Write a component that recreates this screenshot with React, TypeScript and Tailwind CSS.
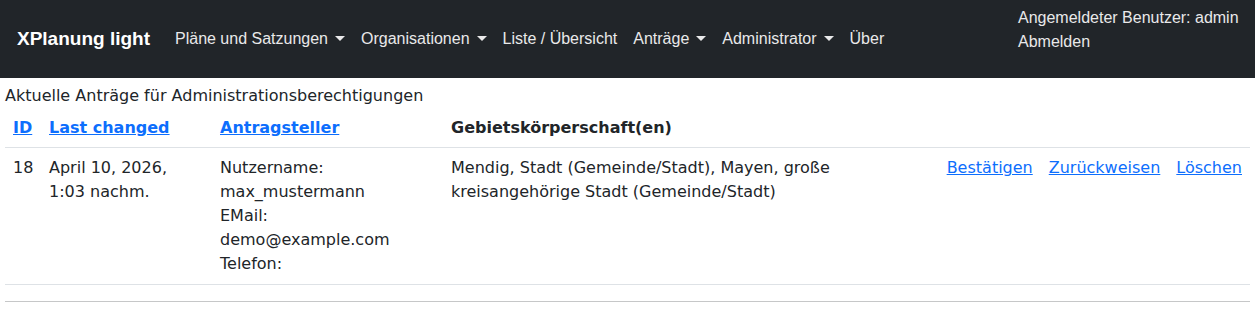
import React from 'react';

const navItems = [
  { label: 'Pläne und Satzungen', dropdown: true },
  { label: 'Organisationen', dropdown: true },
  { label: 'Liste / Übersicht', dropdown: false },
  { label: 'Anträge', dropdown: true },
  { label: 'Administrator', dropdown: true },
  { label: 'Über', dropdown: false },
];

const Caret = () => (
  <span className="ml-[7px] inline-block align-[3px] border-t-[5px] border-x-[5px] border-x-transparent border-t-[#e9e9ea]" />
);

export default function App() {
  return (
    <div className="min-h-[310px] bg-white text-[#212529] font-['DejaVu_Sans',sans-serif]">
      {/* Navbar */}
      <nav className="h-[78px] bg-[#212529] flex items-center pl-[17px] pr-4 font-['Liberation_Sans',Arial,sans-serif]">
        <span className="text-[19px] font-bold text-white mr-[17px]">XPlanung light</span>
        <ul className="flex items-center">
          {navItems.map((item) => (
            <li key={item.label} className="px-2 text-[16px] text-[#e9e9ea] whitespace-nowrap">
              {item.label}
              {item.dropdown && <Caret />}
            </li>
          ))}
        </ul>
        <div className="ml-auto self-start pt-[6px] text-[16px] leading-[24px] text-[#e9e9ea] w-[221px]">
          <div>Angemeldeter Benutzer: admin</div>
          <div>Abmelden</div>
        </div>
      </nav>

      {/* Content */}
      <div className="px-[5px]">
        <div className="pt-[6px] text-[16px] leading-[24px]">
          Aktuelle Anträge für Administrationsberechtigungen
        </div>
        <table className="w-full table-fixed border-collapse text-[16px] leading-[24px]">
          <colgroup>
            <col className="w-[36px]" />
            <col className="w-[171px]" />
            <col className="w-[231px]" />
            <col className="w-[497px]" />
            <col />
          </colgroup>
          <thead>
            <tr className="border-b border-[#dee2e6]">
              <th className="px-2 pt-2 pb-[7px] text-left font-bold">
                <a className="text-[#0d6efd] underline">ID</a>
              </th>
              <th className="px-2 pt-2 pb-[7px] text-left font-bold">
                <a className="text-[#0d6efd] underline">Last changed</a>
              </th>
              <th className="px-2 pt-2 pb-[7px] text-left font-bold">
                <a className="text-[#0d6efd] underline">Antragsteller</a>
              </th>
              <th className="px-2 pt-2 pb-[7px] text-left font-bold">Gebietskörperschaft(en)</th>
              <th className="px-2 pt-2 pb-[7px]" />
            </tr>
          </thead>
          <tbody>
            <tr className="border-b border-[#dee2e6] align-top">
              <td className="p-2">18</td>
              <td className="p-2">April 10, 2026, 1:03 nachm.</td>
              <td className="p-2">
                <div>Nutzername:</div>
                <div>max_mustermann</div>
                <div>EMail:</div>
                <div>demo@example.com</div>
                <div>Telefon:</div>
              </td>
              <td className="p-2">
                Mendig, Stadt (Gemeinde/Stadt), Mayen, große kreisangehörige Stadt (Gemeinde/Stadt)
              </td>
              <td className="p-2">
                <div className="flex justify-end gap-4 whitespace-nowrap">
                  <a className="text-[#0d6efd] underline">Bestätigen</a>
                  <a className="text-[#0d6efd] underline">Zurückweisen</a>
                  <a className="text-[#0d6efd] underline">Löschen</a>
                </div>
              </td>
            </tr>
          </tbody>
        </table>
        <hr className="mt-4 border-0 border-t border-[#c6c7c8]" />
      </div>
    </div>
  );
}
